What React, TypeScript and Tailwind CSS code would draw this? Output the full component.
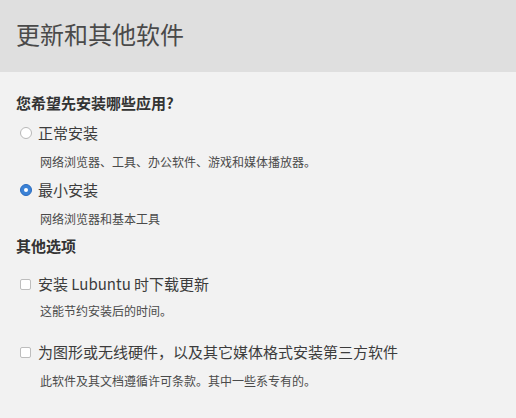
import { useState } from 'react';

const font = { fontFamily: '"Noto Sans CJK SC", "Noto Sans", sans-serif' };

function Radio({ checked }: { checked: boolean }) {
  return checked ? (
    <span className="flex h-[12px] w-[12px] items-center justify-center rounded-full bg-[#3b82d6] border border-[#2a6cc0]">
      <span className="h-[4px] w-[4px] rounded-full bg-white" />
    </span>
  ) : (
    <span className="h-[12px] w-[12px] rounded-full border border-[#b8b8b8] bg-white" />
  );
}

function Check() {
  return <span className="h-[11px] w-[11px] rounded-[2px] border border-[#bdbdbd] bg-white" />;
}

export default function App() {
  const [mode, setMode] = useState<'normal' | 'minimal'>('minimal');

  return (
    <div className="h-[418px] w-[516px] overflow-hidden bg-[#f2f2f2] text-[#3c3c3c]" style={font}>
      <div className="flex h-[72px] items-center bg-[#dfdfdf] pb-[4px] pl-4">
        <h1 className="text-[24px] leading-none text-[#4a4a4a]">更新和其他软件</h1>
      </div>

      <div className="px-4">
        <h2 className="mt-[21px] h-[20px] text-[15px] font-bold leading-[20px] text-[#333]">您希望先安装哪些应用?</h2>

        <button onClick={() => setMode('normal')} className="mt-[10px] flex h-[20px] items-center gap-[6px] pl-[4px]">
          <Radio checked={mode === 'normal'} />
          <span className="text-[15px] leading-[20px]">正常安装</span>
        </button>
        <p className="mt-[10px] h-[18px] pl-[24px] text-[12px] leading-[18px] text-[#4a4a4a]">网络浏览器、工具、办公软件、游戏和媒体播放器。</p>

        <button onClick={() => setMode('minimal')} className="mt-[9px] flex h-[20px] items-center gap-[6px] pl-[4px]">
          <Radio checked={mode === 'minimal'} />
          <span className="text-[15px] leading-[20px]">最小安装</span>
        </button>
        <p className="mt-[10px] h-[18px] pl-[24px] text-[12px] leading-[18px] text-[#4a4a4a]">网络浏览器和基本工具</p>

        <h2 className="mt-[8px] h-[20px] text-[15px] font-bold leading-[20px] text-[#333]">其他选项</h2>

        <div className="mt-[18px] flex h-[20px] items-center gap-[7px] pl-[4px]">
          <Check />
          <span className="text-[15px] leading-[20px]">安装 Lubuntu 时下载更新</span>
        </div>
        <p className="mt-[8px] h-[18px] pl-[24px] text-[12px] leading-[18px] text-[#4a4a4a]">这能节约安装后的时间。</p>

        <div className="mt-[22px] flex h-[20px] items-center gap-[7px] pl-[4px]">
          <Check />
          <span className="text-[15px] leading-[20px]">为图形或无线硬件，以及其它媒体格式安装第三方软件</span>
        </div>
        <p className="mt-[10px] h-[18px] pl-[24px] text-[12px] leading-[18px] text-[#4a4a4a]">此软件及其文档遵循许可条款。其中一些系专有的。</p>
      </div>
    </div>
  );
}
